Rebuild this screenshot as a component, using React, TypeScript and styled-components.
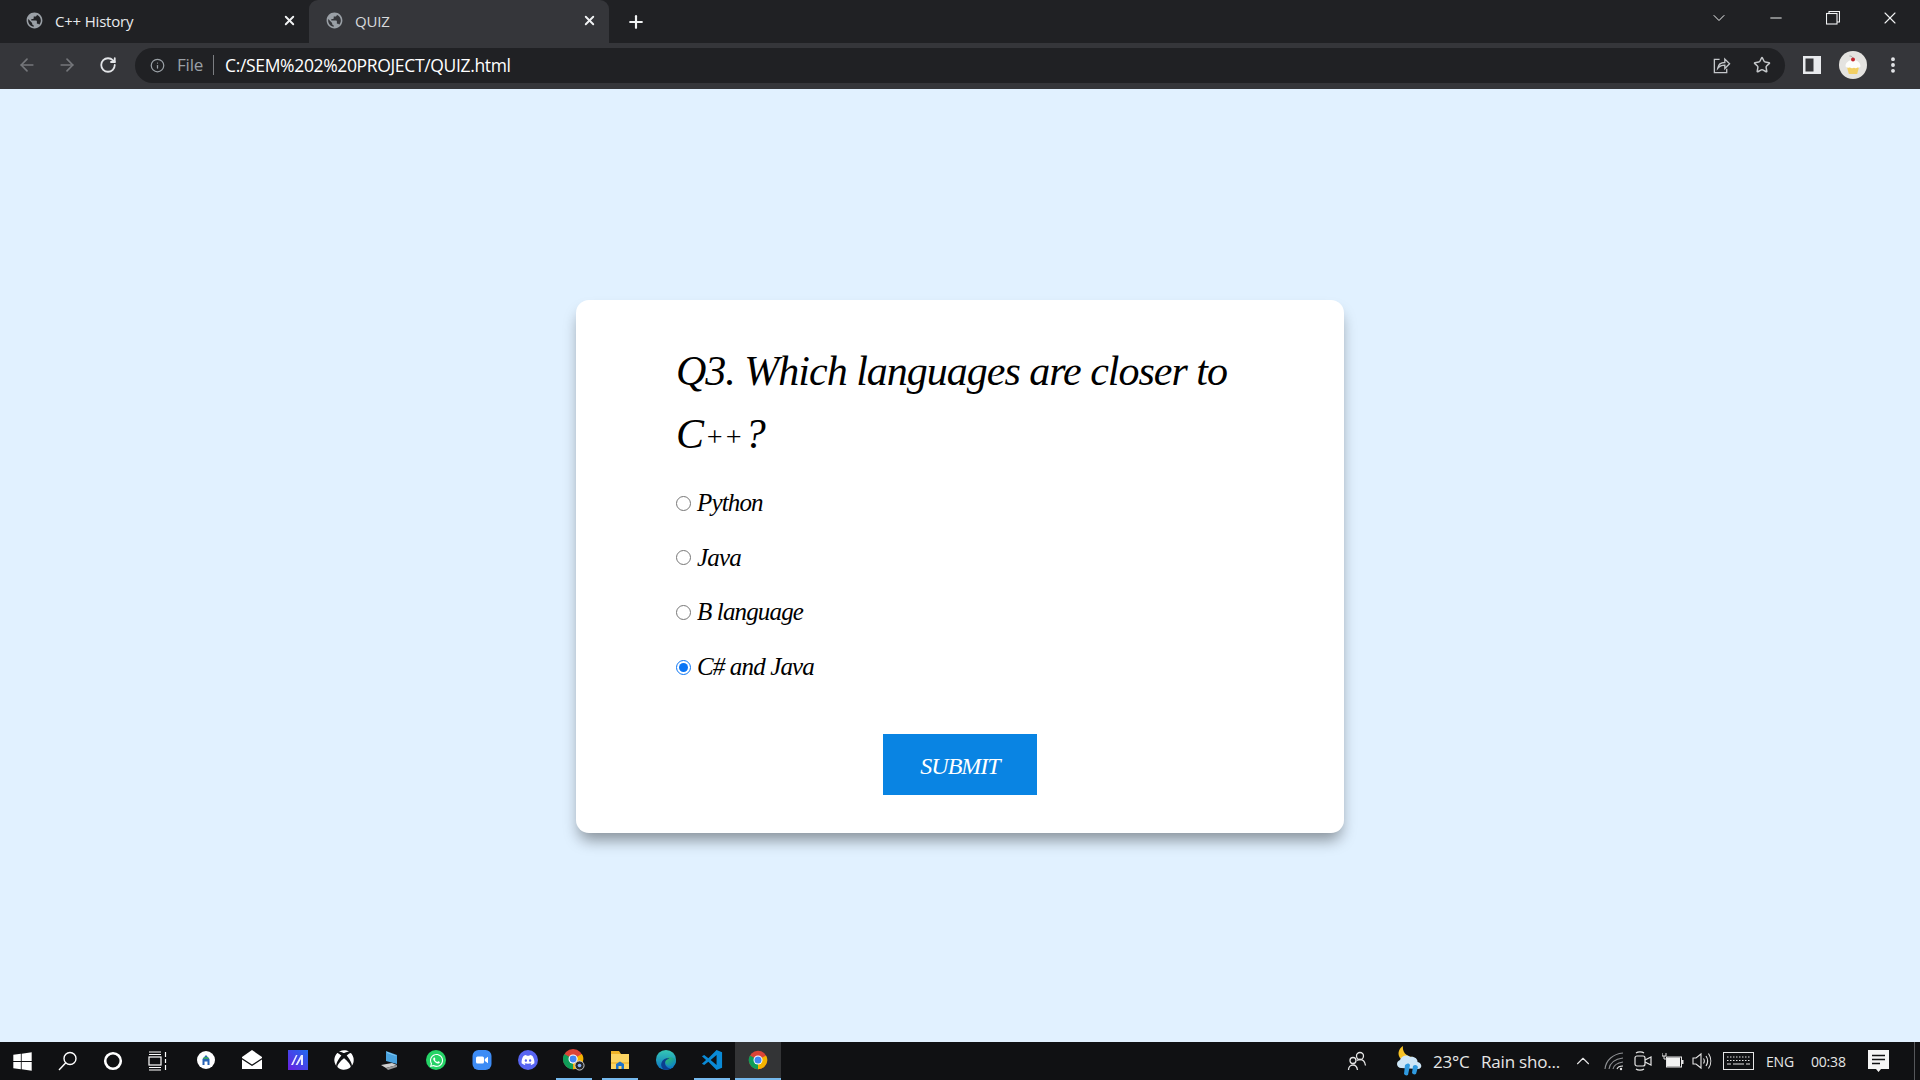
import styled, { createGlobalStyle } from 'styled-components';
import { ArrowLeft, ArrowRight, RotateCw, Info, Star, Plus, X, ChevronDown, ChevronUp, Minus, EllipsisVertical } from 'lucide-react';
import { MdPublic } from 'react-icons/md';
import { FaWindows, FaXbox, FaDiscord, FaWhatsapp } from 'react-icons/fa';

const GlobalStyle = createGlobalStyle`
  html, body {
    margin: 0;
    padding: 0;
    height: 100%;
    overflow: hidden;
  }
  #root {
    height: 100%;
  }
`;

const Screen = styled.div`
  display: flex;
  flex-direction: column;
  width: 1920px;
  height: 1080px;
  background: #e1f1ff;
  font-family: "Open Sans", "Noto Sans", sans-serif;
`;

const TabStrip = styled.div`
  display: flex;
  align-items: stretch;
  height: 43px;
  background: #202124;
  color: #e8eaed;
`;

const Tab = styled.div<{ $active?: boolean }>`
  display: flex;
  align-items: center;
  width: 300px;
  margin-right: ${p => (p.$active ? '0' : '9px')};
  padding: ${p => (p.$active ? '0 12px 2px 16px' : '0 3px 2px 25px')};
  box-sizing: border-box;
  background: ${p => (p.$active ? '#35363a' : 'transparent')};
  border-radius: ${p => (p.$active ? '9px 9px 0 0' : '0')};
  color: ${p => (p.$active ? '#d7d9dc' : '#e8eaed')};
`;

const TabTitle = styled.span`
  flex: 1;
  margin-left: 11px;
  font-size: 15px;
  letter-spacing: -0.2px;
`;

const NewTab = styled.div`
  display: flex;
  align-items: center;
  margin-left: 17px;
  color: #f1f3f4;
`;

const WindowControls = styled.div`
  display: flex;
  align-items: center;
  margin-left: auto;
  margin-top: -7px;
  padding-right: 2px;
  color: #f1f3f4;
`;

const WindowButton = styled.div<{ $w: number }>`
  display: flex;
  justify-content: center;
  align-items: center;
  width: ${p => p.$w}px;
`;

const Toolbar = styled.div`
  display: flex;
  align-items: center;
  height: 46px;
  background: #35363a;
  color: #dadce0;
  box-sizing: border-box;
  padding-bottom: 2px;
`;

const NavButton = styled.div<{ $w: number; $off?: boolean }>`
  display: flex;
  justify-content: center;
  align-items: center;
  width: ${p => p.$w}px;
  color: ${p => (p.$off ? '#75777b' : '#e3e5e8')};
`;

const NavGroup = styled.div`
  display: flex;
  width: 135px;
  padding-left: 7px;
  box-sizing: border-box;
`;

const Omnibox = styled.div`
  display: flex;
  align-items: center;
  width: 1650px;
  height: 35px;
  padding: 0 14px 0 15px;
  box-sizing: border-box;
  background: #202124;
  border-radius: 18px;
`;

const Scheme = styled.span`
  margin-left: 12px;
  padding-right: 10px;
  border-right: 1px solid #7c7e82;
  color: #9aa0a6;
  font-size: 17px;
  line-height: 20px;
  letter-spacing: -0.2px;
`;

const Url = styled.span`
  flex: 1;
  margin-left: 11px;
  color: #ffffff;
  font-size: 17.5px;
  letter-spacing: -0.35px;
`;

const OmniIcons = styled.div`
  display: flex;
  align-items: center;
  gap: 22px;
  color: #c4c7ca;
`;

const ToolIcons = styled.div`
  display: flex;
  align-items: center;
  padding-left: 14px;
`;

const ToolSlot = styled.div<{ $w: number }>`
  display: flex;
  justify-content: center;
  align-items: center;
  width: ${p => p.$w}px;
  color: #e8eaed;
`;

const Page = styled.main`
  flex: 1;
  display: flex;
  justify-content: center;
  align-items: center;
`;

const Card = styled.form`
  width: 768px;
  height: 533px;
  margin-top: 2px;
  padding: 40px 100px 0;
  box-sizing: border-box;
  background: #ffffff;
  border-radius: 13px;
  box-shadow: 0 10px 15px -3px rgba(0, 0, 0, 0.4);
  font-family: "Liberation Serif", "Times New Roman", serif;
  font-style: italic;
  color: #000000;
`;

const Question = styled.h2`
  margin: 0 0 10px;
  font-size: 42px;
  font-weight: 400;
  line-height: 63px;
  letter-spacing: -1px;
`;

const Pluses = styled.span`
  margin: 0 2px;
  font-size: 28px;
  line-height: 0;
  letter-spacing: 0;
  vertical-align: 2px;
`;

const Option = styled.label`
  display: flex;
  align-items: center;
  height: 54.6px;
  font-size: 25px;
  letter-spacing: -0.85px;
`;

const Radio = styled.input.attrs({ type: 'radio', name: 'q3' })`
  width: 15px;
  height: 15px;
  margin: 0 6px 0 0;
  accent-color: #0a75f5;
`;

const SubmitRow = styled.div`
  display: flex;
  justify-content: center;
  margin-top: 40px;
`;

const Submit = styled.button`
  width: 154px;
  height: 61px;
  padding: 3px 0 0;
  border: none;
  background: #0984e3;
  color: #ffffff;
  font-family: inherit;
  font-style: italic;
  font-size: 24px;
  letter-spacing: -1px;
`;

const Taskbar = styled.footer`
  display: flex;
  align-items: stretch;
  height: 38px;
  background: #101113;
  color: #ffffff;
`;

const SystemSlot = styled.div`
  display: flex;
  justify-content: center;
  align-items: center;
  width: 45px;
`;

const Apps = styled.div`
  display: flex;
  margin-left: 3px;
`;

const AppSlot = styled.div<{ $open?: boolean; $active?: boolean }>`
  position: relative;
  display: flex;
  justify-content: center;
  align-items: center;
  width: 46px;
  padding-bottom: 2px;
  box-sizing: border-box;
  background: ${p => (p.$active ? '#333436' : 'transparent')};

  &::after {
    content: '';
    position: absolute;
    left: ${p => (p.$active ? '0' : '5px')};
    right: ${p => (p.$active ? '0' : '5px')};
    bottom: 0;
    height: 2px;
    background: ${p => (p.$open ? '#76b9ed' : 'transparent')};
  }
`;

const Tray = styled.div`
  display: flex;
  align-items: stretch;
  margin-left: auto;
`;

const TraySlot = styled.div<{ $w: number }>`
  display: flex;
  justify-content: center;
  align-items: center;
  width: ${p => p.$w}px;
  color: #e6e6e6;
`;

const TrayText = styled.div<{ $w: number; $size?: number; $indent?: number }>`
  display: flex;
  align-items: center;
  width: ${p => p.$w}px;
  box-sizing: border-box;
  padding-left: ${p => p.$indent ?? 0}px;
  font-size: ${p => p.$size ?? 16}px;
  color: #e6e6e6;
  white-space: nowrap;
  letter-spacing: -0.2px;
`;

const DesktopEdge = styled.div`
  width: 21px;
  box-sizing: border-box;
  border-right: 1px solid #55575a;
  margin-right: 0;
  transform: translateX(-5px);
`;

const ChromeIcon = ({ size = 20 }: { size?: number }) => (
  <svg width={size} height={size} viewBox="0 0 24 24">
    <circle cx="12" cy="12" r="11" fill="#db4437" />
    <path d="M12 12 L2.4 6.5 A11 11 0 0 0 12 23 Z" fill="#0f9d58" />
    <path d="M12 12 L12 23 A11 11 0 0 0 21.6 6.5 Z" fill="#f4b400" />
    <circle cx="12" cy="12" r="5.4" fill="#ffffff" />
    <circle cx="12" cy="12" r="4.2" fill="#4285f4" />
  </svg>
);

const ChromeDevIcon = () => (
  <svg width="22" height="24" viewBox="0 0 24 26">
    <circle cx="11" cy="12" r="11" fill="#db4437" />
    <path d="M11 12 L1.400 6.500 A11 11 0 0 0 11 23 Z" fill="#0f9d58" />
    <path d="M11 12 L11 23 A11 11 0 0 0 20.600 6.500 Z" fill="#f4b400" />
    <circle cx="11" cy="12" r="5" fill="#ffffff" />
    <circle cx="11" cy="12" r="3.800" fill="#4285f4" />
    <circle cx="18" cy="19" r="5" fill="#26282b" stroke="#d8d8d8" strokeWidth="1" />
    <circle cx="18" cy="19" r="2" fill="#8ab4f8" />
  </svg>
);

const ShareIcon = () => (
  <svg width="19" height="19" viewBox="0 0 20 20" fill="none" stroke="currentColor" strokeWidth="1.4">
    <path d="M8 3.5H2.5v14h13v-4" />
    <path d="M6 13c.6-3.8 3.4-6.2 7.5-6.2V3.2l5 5-5 5V9.6c-3 0-5.600 1-7.500 3.400Z" />
  </svg>
);

const SidePanelIcon = () => (
  <svg width="18" height="18" viewBox="0 0 18 18">
    <rect x="0" y="0" width="18" height="18" fill="#e8eaed" />
    <rect x="2.500" y="2.500" width="8" height="13" fill="#35363a" />
  </svg>
);

const Avatar = () => (
  <svg width="28" height="28" viewBox="0 0 28 28">
    <circle cx="14" cy="14" r="14" fill="#e4e3e0" />
    <path d="M8 16h12l-1.800 7h-8.400Z" fill="#f2cf63" />
    <path d="M6.500 15c0-3 3-6 7.500-6s7.500 3 7.500 6c0 1.500-1.500 2-3 1.600-1 .8-2.500.8-3.500 .2-1.500 .7-3 .5-4-.2-1.500 .4-4.500 0-4.500-1.600Z" fill="#fdfdfb" />
    <circle cx="14" cy="8.500" r="2" fill="#c3242d" />
    <path d="M14 7c-.8-1.500-2-2-3.500-2" stroke="#8a8a85" strokeWidth=".7" fill="none" />
  </svg>
);

const SearchIcon = () => (
  <svg width="20" height="20" viewBox="0 0 20 20" fill="none" stroke="#fff" strokeWidth="1.4">
    <circle cx="12" cy="7.500" r="6" />
    <path d="M7.800 11.800 1 19" />
  </svg>
);

const CortanaIcon = () => (
  <svg width="20" height="20" viewBox="0 0 20 20" fill="none" stroke="#fff" strokeWidth="2.600">
    <circle cx="10" cy="10" r="7.800" />
  </svg>
);

const TaskViewIcon = () => (
  <svg width="20" height="20" viewBox="0 0 20 20" fill="none" stroke="#fff" strokeWidth="1.200">
    <path d="M1 1h12M1 3.500h12M1 16.500h12M1 19h12" />
    <rect x="1" y="6" width="12" height="8" />
    <path d="M17.500 1v5M17.500 8v4M17.500 14v5" />
  </svg>
);

const PillIcon = () => (
  <svg width="20" height="20" viewBox="0 0 20 20">
    <circle cx="10" cy="10" r="9" fill="#ffffff" />
    <path d="M6.500 15V9l3.500-4 3.500 4v6h-2v-3.500h-3V15Z" fill="#2763b5" />
    <path d="M8 7h4l1 2H7Z" fill="#38a169" />
  </svg>
);

const MailIcon = () => (
  <svg width="20" height="20" viewBox="0 0 20 20">
    <path d="M0 7 10 0l10 7v12H0Z" fill="#ffffff" />
    <path d="M0 8 10 14.500 20 8v1.500L10 16 0 9.500Z" fill="#101113" />
  </svg>
);

const MakeIcon = () => (
  <svg width="20" height="20" viewBox="0 0 20 20">
    <defs>
      <linearGradient id="makeBg" x1="0" y1="1" x2="1" y2="0">
        <stop offset="0" stopColor="#6a1fe0" />
        <stop offset="1" stopColor="#1f6cf0" />
      </linearGradient>
    </defs>
    <rect width="20" height="20" fill="url(#makeBg)" />
    <path d="M3 15 8 5h1.500L5 15ZM7.500 15 13 5h2v10h-2V9l-3.500 6Z" fill="#e8ecff" />
  </svg>
);

const PcIcon = () => (
  <svg width="20" height="22" viewBox="0 0 20 22">
    <path d="M6 2 17 6v9L6 12Z" fill="#4aa3df" />
    <path d="M7 3 15.500 6.200 16 7 7 4Z" fill="#8fd0f5" />
    <path d="M1 16 12 14l5 2-11 3Z" fill="#d0d0d0" />
    <path d="M6 19 17 16v2L8 21Z" fill="#9a9a9a" />
  </svg>
);

const ZoomIcon = () => (
  <svg width="20" height="22" viewBox="0 0 20 22">
    <rect x="0.500" y="1" width="19" height="20" rx="6" fill="#3d8cf5" />
    <rect x="4" y="7.500" width="8" height="7" rx="1.500" fill="#ffffff" />
    <path d="M12.800 10 16 7.800v6.400L12.800 12Z" fill="#ffffff" />
  </svg>
);

const DiscordBadge = styled.div`
  display: flex;
  justify-content: center;
  align-items: center;
  width: 20px;
  height: 20px;
  border-radius: 50%;
  background: #5865f2;
  color: #ffffff;
`;

const WhatsappBadge = styled.div`
  display: flex;
  justify-content: center;
  align-items: center;
  width: 20px;
  height: 20px;
  border-radius: 50%;
  background: #25d366;
  color: #ffffff;
`;

const FilesIcon = () => (
  <svg width="19" height="22" viewBox="0 0 19 22">
    <path d="M0 2h8l2 3H0Z" fill="#f0b429" />
    <rect x="0" y="5" width="18" height="15" fill="#fcd462" />
    <rect x="0" y="13" width="18" height="2" fill="#f3bf3f" />
    <path d="M5 20v-5l4-2.500 4 2.500v5h-2.500v-3h-3v3Z" fill="#1f73c9" />
  </svg>
);

const EdgeIcon = () => (
  <svg width="22" height="24" viewBox="0 0 24 24">
    <defs>
      <linearGradient id="edgeA" x1="0" y1="0" x2="0" y2="1">
        <stop offset="0" stopColor="#36c9b4" />
        <stop offset="1" stopColor="#0a6fc4" />
      </linearGradient>
      <linearGradient id="edgeB" x1="0" y1="0" x2="1" y2="1">
        <stop offset="0" stopColor="#2fc864" />
        <stop offset="1" stopColor="#0b7bd0" />
      </linearGradient>
    </defs>
    <circle cx="12" cy="12" r="11" fill="url(#edgeA)" />
    <path d="M23 13c0-2-3-4-7-4-3.500 0-5.500 2.500-5 5 .5 3 3.500 5 7 4.500 2.500-.400 4.500-2.500 5-5.500Z" fill="url(#edgeB)" />
    <path d="M9 22c-3-3-3-7 0-10 2-2 5-2.500 7-1.500-1.500 0-5 1-5 5 0 3 3 5.500 6 5.500-3 2-6 2-8 1Z" fill="#0c3f8f" />
  </svg>
);

const VscodeIcon = () => (
  <svg width="22" height="24" viewBox="0 0 24 24">
    <path d="M17 1 8 10 3.500 6.500 1 8l4.500 4L1 16l2.500 1.500L8 14l9 9 6-2.500V3.500Z" fill="#0a8ad6" />
    <path d="M17 6.500 10.500 12 17 17.500Z" fill="#101113" />
  </svg>
);

const PeopleIcon = () => (
  <svg width="20" height="22" viewBox="0 0 20 22" fill="none" stroke="#e6e6e6" strokeWidth="1.300">
    <circle cx="13" cy="6" r="3.500" />
    <circle cx="6" cy="10.500" r="3" />
    <path d="M1.500 20c0-3 2-5 4.500-5s4 2 4.500 5M10 10.500c1-.8 2-1 3-1 3 0 5 2.500 5.500 6" />
  </svg>
);

const WeatherIcon = () => (
  <svg width="30" height="32" viewBox="0 0 30 32">
    <path d="M9 1c-1 5 3 11 10 11-2 4-8 5-12 2C3 10 4 4 9 1Z" fill="#f7c325" />
    <path d="M7 23c-4 0-6-6-1-8 1-4 7-6 10-3 4-1 8 2 7.500 5 5 1 5 7 .500 7Z" fill="#cde6f7" />
    <path d="M11 20c2-2 4-2 5 0l-2 10c-2 1-3 0-4-1ZM19 21c2-2 4-1 5 1l-2 7c-2 1-3 0-4-1Z" fill="#2f9ae0" />
  </svg>
);

const WifiIcon = () => (
  <svg width="20" height="20" viewBox="0 0 20 20" fill="none" stroke="#8f9194" strokeWidth="1.100">
    <path d="M1 18C2 9 9 3 19 2M5 18c1-6 6-10 14-11M9 18c.5-3 4-6 10-7" />
    <path d="M13 18c.5-1.500 3-3 6-3" stroke="#e6e6e6" />
    <circle cx="17" cy="18" r="1.200" fill="#e6e6e6" stroke="none" />
  </svg>
);

const MeetIcon = () => (
  <svg width="20" height="22" viewBox="0 0 20 22" fill="none" stroke="#e6e6e6" strokeWidth="1.200">
    <rect x="2" y="6" width="10" height="10" rx="2" />
    <path d="M12 10l6-3v8l-6-3" />
    <path d="M3 3c2-1.500 6-1.500 8 0M3 19c2 1.500 6 1.500 8 0" />
  </svg>
);

const BatteryIcon = () => (
  <svg width="22" height="18" viewBox="0 0 22 18">
    <rect x="4.500" y="5" width="15" height="10" fill="none" stroke="#e6e6e6" strokeWidth="1" />
    <rect x="5" y="5.500" width="13" height="9" fill="#f2f2f2" />
    <rect x="20" y="8" width="1.500" height="4" fill="#e6e6e6" />
    <path d="M0 1v3h4V1M2 4v3h3" stroke="#e6e6e6" fill="none" strokeWidth="1" />
  </svg>
);

const VolumeIcon = () => (
  <svg width="20" height="20" viewBox="0 0 20 20" fill="none" stroke="#e6e6e6" strokeWidth="1.100">
    <path d="M1 7h3l5-4v14l-5-4H1Z" />
    <path d="M11.500 7.500c1 1.500 1 3.500 0 5M14 5c2 3 2 7 0 10M16.500 2.500c3 4.500 3 10.500 0 15" />
  </svg>
);

const KeyboardIcon = () => (
  <svg width="31" height="18" viewBox="0 0 31 18" fill="none" stroke="#e6e6e6" strokeWidth="1">
    <rect x="0.500" y="0.500" width="30" height="17" />
    <path d="M4 5h23M4 8.500h23" strokeDasharray="1.500 1.500" />
    <path d="M4 12h4M10 12h11M23 12h4" />
  </svg>
);

const NotificationIcon = () => (
  <svg width="21" height="23" viewBox="0 0 21 23">
    <path d="M0 0h21v19h-8l-2.500 3-2.500-3H0Z" fill="#f5f5f5" />
    <path d="M4 5.500h13M4 9.500h13M4 13.500h8" stroke="#101113" strokeWidth="1.300" />
  </svg>
);

const options = [
  { label: 'Python' },
  { label: 'Java' },
  { label: 'B language' },
  { label: 'C# and Java', checked: true },
];

const apps = [
  { key: 'pill', icon: <PillIcon /> },
  { key: 'mail', icon: <MailIcon /> },
  { key: 'make', icon: <MakeIcon /> },
  { key: 'xbox', icon: <FaXbox size={20} color="#fff" /> },
  { key: 'pc', icon: <PcIcon /> },
  { key: 'whatsapp', icon: <WhatsappBadge><FaWhatsapp size={15} /></WhatsappBadge> },
  { key: 'zoom', icon: <ZoomIcon /> },
  { key: 'discord', icon: <DiscordBadge><FaDiscord size={14} /></DiscordBadge> },
  { key: 'chrome-dev', icon: <ChromeDevIcon />, open: true },
  { key: 'files', icon: <FilesIcon />, open: true },
  { key: 'edge', icon: <EdgeIcon /> },
  { key: 'vscode', icon: <VscodeIcon />, open: true },
  { key: 'chrome', icon: <ChromeIcon />, open: true, active: true },
];

const App = () => {
  return (
    <Screen>
      <GlobalStyle />
      <TabStrip>
        <Tab>
          <MdPublic size={19} color="#9aa0a6" />
          <TabTitle>C++ History</TabTitle>
          <X size={15} strokeWidth={3} color="#f1f3f4" />
        </Tab>
        <Tab $active>
          <MdPublic size={19} color="#9aa0a6" />
          <TabTitle>QUIZ</TabTitle>
          <X size={15} strokeWidth={3} color="#f1f3f4" />
        </Tab>
        <NewTab>
          <Plus size={20} strokeWidth={2.6} />
        </NewTab>
        <WindowControls>
          <WindowButton $w={57}><ChevronDown size={20} strokeWidth={1.2} /></WindowButton>
          <WindowButton $w={57}><Minus size={18} strokeWidth={1.3} /></WindowButton>
          <WindowButton $w={57}>
            <svg width="14" height="14" viewBox="0 0 14 14" fill="none" stroke="currentColor" strokeWidth="1.100">
              <rect x="0.500" y="2.500" width="10.500" height="10.500" />
              <path d="M3 2.500V.5h10.500V11H11" />
            </svg>
          </WindowButton>
          <WindowButton $w={57}><X size={20} strokeWidth={1.3} /></WindowButton>
        </WindowControls>
      </TabStrip>
      <Toolbar>
        <NavGroup>
          <NavButton $w={40} $off><ArrowLeft size={20} strokeWidth={2} /></NavButton>
          <NavButton $w={40} $off><ArrowRight size={20} strokeWidth={2} /></NavButton>
          <NavButton $w={41}><RotateCw size={18} strokeWidth={2.4} /></NavButton>
        </NavGroup>
        <Omnibox>
          <Info size={15} color="#9aa0a6" />
          <Scheme>File</Scheme>
          <Url>C:/SEM%202%20PROJECT/QUIZ.html</Url>
          <OmniIcons>
            <ShareIcon />
            <Star size={18} strokeWidth={2} />
          </OmniIcons>
        </Omnibox>
        <ToolIcons>
          <ToolSlot $w={26}><SidePanelIcon /></ToolSlot>
          <ToolSlot $w={55}><Avatar /></ToolSlot>
          <ToolSlot $w={26}><EllipsisVertical size={20} strokeWidth={2.6} /></ToolSlot>
        </ToolIcons>
      </Toolbar>
      <Page>
        <Card>
          <Question>Q3. Which languages are closer to C<Pluses>++</Pluses>?</Question>
          {options.map(option => (
            <Option key={option.label}>
              <Radio defaultChecked={option.checked} />
              {option.label}
            </Option>
          ))}
          <SubmitRow>
            <Submit type="button">SUBMIT</Submit>
          </SubmitRow>
        </Card>
      </Page>
      <Taskbar>
        <SystemSlot><FaWindows size={21} /></SystemSlot>
        <SystemSlot><SearchIcon /></SystemSlot>
        <SystemSlot><CortanaIcon /></SystemSlot>
        <SystemSlot><TaskViewIcon /></SystemSlot>
        <Apps>
          {apps.map(app => (
            <AppSlot key={app.key} $open={app.open} $active={app.active}>{app.icon}</AppSlot>
          ))}
        </Apps>
        <Tray>
          <TraySlot $w={40}><PeopleIcon /></TraySlot>
          <TraySlot $w={16} />
          <TraySlot $w={32}><WeatherIcon /></TraySlot>
          <TraySlot $w={8} />
          <TrayText $w={48} $size={17}>23°C</TrayText>
          <TrayText $w={89} $size={17}>Rain sho...</TrayText>
          <TraySlot $w={26}><ChevronUp size={22} strokeWidth={1.2} /></TraySlot>
          <TraySlot $w={36}><WifiIcon /></TraySlot>
          <TraySlot $w={22}><MeetIcon /></TraySlot>
          <TraySlot $w={38}><BatteryIcon /></TraySlot>
          <TraySlot $w={20}><VolumeIcon /></TraySlot>
          <TraySlot $w={52}><KeyboardIcon /></TraySlot>
          <TrayText $w={45} $size={14} $indent={2}>ENG</TrayText>
          <TrayText $w={48} $size={14} $indent={2}>00:38</TrayText>
          <TraySlot $w={42}><NotificationIcon /></TraySlot>
          <DesktopEdge />
        </Tray>
      </Taskbar>
    </Screen>
  );
};

export default App;
